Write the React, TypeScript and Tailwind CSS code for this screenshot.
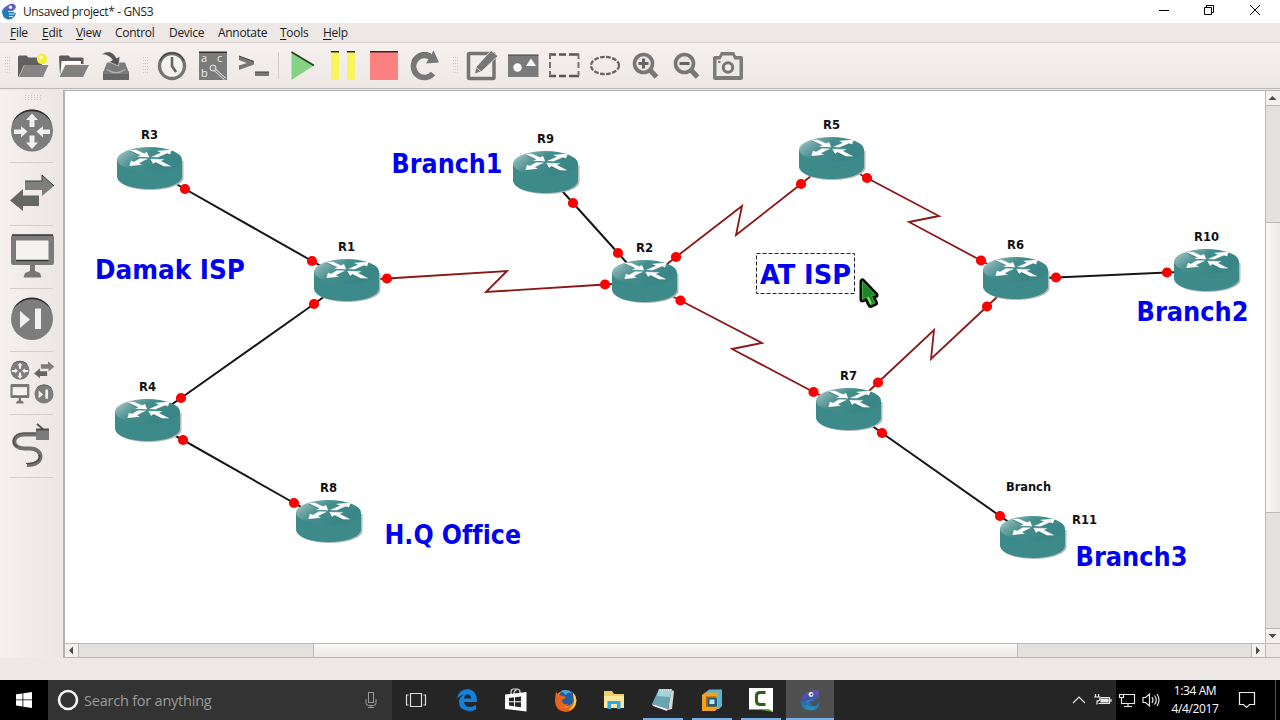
import type { ReactNode } from "react";

type Point = [number, number];

const menus = [
  { label: "File", key: true, width: "w-8" },
  { label: "Edit", key: true, width: "w-[34px]" },
  { label: "View", key: true, width: "w-[39px]" },
  { label: "Control", key: false, width: "w-[54px]" },
  { label: "Device", key: false, width: "w-[49px]" },
  { label: "Annotate", key: false, width: "w-[62px]" },
  { label: "Tools", key: true, width: "w-[43px]" },
  { label: "Help", key: true, width: "w-10" },
];

const routers = [
  { name: "R3", x: 117, y: 147, lx: 149, ly: 139 },
  { name: "R1", x: 314, y: 259, lx: 346, ly: 251 },
  { name: "R9", x: 513, y: 151, lx: 545, ly: 143 },
  { name: "R2", x: 612, y: 260, lx: 644, ly: 252 },
  { name: "R5", x: 799, y: 137, lx: 831, ly: 129 },
  { name: "R6", x: 983, y: 257, lx: 1015, ly: 249 },
  { name: "R10", x: 1174, y: 249, lx: 1206, ly: 241 },
  { name: "R7", x: 816, y: 388, lx: 848, ly: 380 },
  { name: "R4", x: 115, y: 399, lx: 147, ly: 391 },
  { name: "R8", x: 296, y: 500, lx: 328, ly: 492 },
  { name: "R11", x: 1000, y: 516, lx: 1084, ly: 524 },
];

const routerArrows = [
  "M12.500 3H19l8 3.500 3-1.200 2 4.900-11.500-.4 3-1.600z",
  "M34.500 10l9.500-4.300L40.500 4l14-1.300L53 7.200l-3-1-9.500 4.100z",
  "M23 11.500l7.500.3-8.800 4.500 2.800 1.400-12 1.300 1.500-4.900 3 .8z",
  "M33.500 12l13.500.4-3.300 1.600 10 5.200H47l-8.500-4.100-2.500 1.600z",
];

// first and last points sit under the routers, the second and second to last carry the status dots
const links: { serial?: boolean; points: Point[] }[] = [
  { points: [[150, 169], [185, 189], [312, 261], [346, 280]] },
  { points: [[346, 281], [314, 304], [181, 398], [148, 421]] },
  { points: [[148, 421], [183, 440], [294, 503], [328, 522]] },
  { points: [[545, 172], [573, 203], [618, 253], [644, 282]] },
  { points: [[1016, 279], [1056, 277.5], [1167, 272.5], [1206, 271]] },
  { points: [[849, 409], [882, 433], [1000, 516], [1032, 538]] },
  { serial: true, points: [[346, 281], [387, 278.5], [507, 271], [486, 292], [605, 284.5], [644, 282]] },
  { serial: true, points: [[644, 282], [676, 257], [742, 206], [736, 235], [801, 184], [832, 159]] },
  { serial: true, points: [[832, 159], [867, 178], [939, 216], [909, 222], [981, 260.5], [1016, 279]] },
  { serial: true, points: [[644, 282], [680.5, 300.5], [762, 343], [732, 349], [813.5, 392], [849, 410]] },
  { serial: true, points: [[849, 410], [878, 382.5], [934, 330], [931, 359], [987, 306.5], [1016, 279]] },
];

const notes = [
  { text: "Branch1", x: 391.5, y: 172.5, width: 111 },
  { text: "Damak ISP", x: 95, y: 278.5, width: 150 },
  { text: "AT ISP", x: 760, y: 283.5, width: 91 },
  { text: "Branch2", x: 1136.5, y: 320.5, width: 112 },
  { text: "H.Q Office", x: 384.5, y: 543.5, width: 136.5 },
  { text: "Branch3", x: 1075.5, y: 565.5, width: 112 },
];

function Grip() {
  return (
    <svg width="6" height="18" viewBox="0 0 6 18" fill="#cfcac7" className="shrink-0">
      {[0, 3, 6, 9, 12, 15].map((y) => (
        <g key={y}>
          <rect x="0" y={y} width="1" height="1" />
          <rect x="2" y={y} width="1" height="1" />
          <rect x="4" y={y} width="1" height="1" />
        </g>
      ))}
    </svg>
  );
}

function Tool({ x, children }: { x: number; children: ReactNode }) {
  return (
    <svg width="41" height="45" viewBox={`${x} 43 41 45`} className="shrink-0" fill="#7b7b7b">
      {children}
    </svg>
  );
}

function Toolbar() {
  return (
    <div className="flex h-[46px] shrink-0 items-center border-t border-[#d5d1ce] bg-linear-to-b from-[#f6f1ee] to-[#ece8e5] pl-[5px]">
      <Grip />
      <div className="ml-px flex">
        <Tool x={12}>
          <path d="M18 57q0-1.5 1.5-1.5h7l2 2H42V65H24l-5.500 12H18z" fill="#606060" />
          <circle cx="42" cy="59" r="5.200" fill="#f4ee3a" />
          <circle cx="41" cy="57.500" r="2" fill="#fffbb0" />
          <path d="M24.500 65H48.500L43 77H19z" fill="#858585" />
        </Tool>
        <Tool x={53}>
          <path d="M59 57q0-1.500 1.500-1.500h8l2 2H82q1.500 0 1.500 1.500v5H81v-3H62l-2 14z" fill="#5b5b5b" />
          <path d="M61.500 61H81v3H65l-4 9z" fill="#fff" />
          <path d="M65.500 65H89L83 77H59.500z" fill="#818181" />
        </Tool>
        <Tool x={94}>
          <path d="M107 62.500h18l3.500 9h.5v8h-26v-8h.5z" />
          <path d="M103 74h26v6h-26z" fill="#666" />
          <path d="M107 69.500q9 6.500 18 0" fill="none" stroke="#b5b5b5" strokeWidth="1.200" />
          <path
            d="M101 54.500q10-7 15.500 3.500l3.500-1.500-1.500 9.500-9.500-4 3.500-2q-4-6-11.500-5.500z"
            fill="#555"
            stroke="#eee"
            strokeWidth=".6"
          />
        </Tool>
      </div>
      <div className="ml-2 flex items-center">
        <Grip />
        <div className="ml-[3px] flex">
          <Tool x={152}>
            <circle cx="172" cy="66" r="12.500" fill="#f4f2f0" stroke="#757575" strokeWidth="3.400" />
            <path d="M160 61a13 13 0 0 1 24 0" fill="none" stroke="#4b4b4b" strokeWidth="1.500" />
            <path d="M172 57v9l4 6" fill="none" stroke="#666" strokeWidth="2.600" />
          </Tool>
          <Tool x={193}>
            <path d="M199 52h28v28h-28z" />
            <path d="M199 51.500h28v1.500h-28z" fill="#333" />
            <g fill="#eee" fontFamily="Open Sans" fontSize="11">
              <text x="201" y="62">a</text>
              <text x="217" y="62">c</text>
              <text x="201" y="77">b</text>
            </g>
            <path d="M214 69l11 10" stroke="#eee" strokeWidth="2.800" />
            <path d="M215 70l10 9" stroke="#777" strokeWidth="1.200" />
            <circle cx="213" cy="68" r="3" fill="#858585" stroke="#eee" />
          </Tool>
          <Tool x={234}>
            <path d="M239 56l15 5.500v3L239 70v-4.500l8-2.500-8-3zM255 72h14v4h-14z" fill="#777" />
            <path d="M239 56l15 5.500M255 72h14" stroke="#454545" />
          </Tool>
        </div>
        <div className="mr-[3px] ml-[3px] h-[27px] w-px bg-[#cfcbc8]" />
        <div className="flex">
          <Tool x={282}>
            <path d="M291.500 52L314 65.500 291.500 80z" fill="#84d284" />
            <path d="M291.500 52L314 65.500" stroke="#263d26" strokeWidth="1.500" />
          </Tool>
          <Tool x={323}>
            <path d="M331 52h8v28h-8zM347 52h8v28h-8z" fill="#faf45c" />
            <path d="M331 51h8v1.500h-8zM347 51h8v1.500h-8z" fill="#333018" />
          </Tool>
          <Tool x={364}>
            <path d="M370 52h28v28h-28z" fill="#ff8080" />
            <path d="M370 51h28v1.500h-28z" fill="#3c2020" />
          </Tool>
          <Tool x={405}>
            <path d="M433 73.500a11 11 0 1 1-1-15" fill="none" stroke="#777" strokeWidth="5.600" />
            <path d="M433.500 50.500L439 62.500 426 63.500z" fill="#777" />
            <path d="M412 61a13.500 13.500 0 0 1 19-7" fill="none" stroke="#555" strokeWidth="1" />
          </Tool>
        </div>
      </div>
      <div className="ml-[7px] flex items-center">
        <Grip />
        <div className="ml-0.5 flex">
          <Tool x={461}>
            <rect x="468.500" y="53.500" width="25.500" height="25" rx="1" fill="#f1eeec" stroke="#757575" strokeWidth="3.500" />
            <path d="M491 50.500l7 5.500-16.500 15.500-7 2.500 1.500-7z" fill="#777" stroke="#f1eeec" strokeWidth=".8" />
            <path d="M476 67.500l5 4" stroke="#eee" strokeWidth=".8" />
          </Tool>
          <Tool x={502}>
            <path d="M508 55h30.500v22H508z" />
            <path d="M508 54.500h30.500v1H508z" fill="#3e3e3e" />
            <circle cx="517.500" cy="67.500" r="4.200" fill="#fff" />
            <path d="M531 58.500l5 7.500h-10z" fill="#fff" />
          </Tool>
          <Tool x={543}>
            <path
              d="M549 54.500h7M559 54.500h7M569 54.500h10M549 76h7M559 76h7M569 76h10"
              stroke="#5a5350"
              strokeWidth="2.600"
            />
            <path d="M550 54v5M550 62v6M550 71v5M578.500 54v5M578.500 62v6M578.500 71v5" stroke="#7a7370" strokeWidth="2" />
          </Tool>
          <Tool x={584}>
            <ellipse cx="605" cy="65.500" rx="14" ry="8.600" fill="none" stroke="#665f5c" strokeWidth="2.200" strokeDasharray="4.500 1.600" />
          </Tool>
          <Tool x={625}>
            <path d="M649.500 69.500l7 7.500" stroke="#777" strokeWidth="5" />
            <circle cx="643.500" cy="63.500" r="9" fill="#e8e5e3" stroke="#777" strokeWidth="3.600" />
            <path d="M638.500 63.500h10M643.500 58.500v10" stroke="#646464" strokeWidth="3" />
          </Tool>
          <Tool x={666}>
            <path d="M690.500 69.500l7 7.500" stroke="#777" strokeWidth="5" />
            <circle cx="684.500" cy="63.500" r="9" fill="#e8e5e3" stroke="#777" strokeWidth="3.600" />
            <path d="M679.500 63.500h10" stroke="#646464" strokeWidth="3" />
          </Tool>
          <Tool x={707}>
            <path d="M721 52h13l2 4h5q2 0 2 2v20q0 2-2 2h-26q-2 0-2-2V58q0-2 2-2h4z" />
            <path d="M722.500 55.500h10l2 4h5v16.500h-23V59.500h4z" fill="#ece9e7" />
            <circle cx="728" cy="67.500" r="4.700" fill="#eee" stroke="#777" strokeWidth="3" />
            <path d="M718 61h2.500v2H718z" />
          </Tool>
        </div>
      </div>
    </div>
  );
}

function RouterDisc() {
  return (
    <>
      <circle cx="32" cy="130.500" r="21" fill="#7d7d7d" />
      <path d="M12 124a21 21 0 0 1 40 0 22 22 0 0 0-40 0z" fill="#2c2c2c" />
      <path
        d="M32 113.500l6 6.500h-3.500v7h-5v-7H26zM32 149l6-6.500h-3.500v-7h-5v7H26zM27.500 131.500L21 126v3.500h-7v4.500h7v3.500zM36.500 131.500L43 126v3.500h7v4.500h-7v3.500z"
        fill="#f2f0ee"
      />
    </>
  );
}

function SwitchArrows() {
  return (
    <>
      <path d="M25 181h17v-6l12 11-12 10v-6H25z" fill="#7f7f7f" />
      <path d="M39 195.500H23V189l-13 11.500L23 211v-5h16z" fill="#666" />
      <path d="M25 181h17v-6l12 11" fill="none" stroke="#3d3d3d" />
    </>
  );
}

function Monitor() {
  return (
    <>
      <path d="M11 237q0-2 2-2h39q2 0 2 2v25q0 3-2 3H13q-2 0-2-3z" fill="#7b7b7b" />
      <path d="M12 235h41" stroke="#333" strokeWidth="1.500" />
      <path d="M16 240.500h32.500V260H16z" fill="#f5f3f1" />
      <path d="M16 260.500h32.500" stroke="#333" strokeWidth="1.500" />
      <path d="M30 265h5v6l5 2 1.500 4.500h-18L25 273l5-2z" fill="#777" />
    </>
  );
}

function NextDisc() {
  return (
    <>
      <circle cx="32" cy="319" r="21" fill="#7d7d7d" />
      <path d="M12 312a21 21 0 0 1 40 0 22 22 0 0 0-40 0z" fill="#2c2c2c" />
      <path d="M20 311l10 8.500L20 328zM35 308.500h6V329h-6z" fill="#f2f0ee" />
    </>
  );
}

function Slot({ y, children }: { y: number; children: ReactNode }) {
  return (
    <div className="h-[63px] border-b border-[#d3cecb]">
      <svg width="44" height="62" viewBox={`10 ${y} 44 62`} className="overflow-visible">
        {children}
      </svg>
    </div>
  );
}

function DeviceBar() {
  return (
    <div className="w-[63px] shrink-0 bg-linear-to-r from-[#f6f1ee] to-[#ebe6e3] px-[10px] pt-[5px]">
      <svg width="44" height="5" viewBox="0 0 44 5" fill="#c8c3c0" className="block">
        {[15, 18, 21, 24, 27, 30].map((x) => (
          <g key={x}>
            <rect x={x} y="0" width="1" height="1" />
            <rect x={x} y="2" width="1" height="1" />
            <rect x={x} y="4" width="1" height="1" />
          </g>
        ))}
      </svg>
      <Slot y={100}><RouterDisc /></Slot>
      <Slot y={163}><SwitchArrows /></Slot>
      <Slot y={226}><Monitor /></Slot>
      <Slot y={289}><NextDisc /></Slot>
      <Slot y={352}>
        <g transform="translate(5.600 311.600) scale(.45)"><RouterDisc /></g>
        <g transform="translate(29.600 283.200) scale(.45)"><SwitchArrows /></g>
        <g transform="translate(5.600 281.300) scale(.44)"><Monitor /></g>
        <g transform="translate(29.600 250.600) scale(.45)"><NextDisc /></g>
      </Slot>
      <Slot y={415}>
        <path d="M37 434.500H24c-13 0-13 14 0 14h6c14 0 15 17-3 16.500" fill="none" stroke="#707070" strokeWidth="4" />
        <path d="M37 433H24c-11 0-14 10-6 14M26 463.500c12 0 15-5 13-9" fill="none" stroke="#484848" strokeWidth="1.200" />
        <path d="M36 429.500h13V440H36z" fill="#7b7b7b" />
        <path d="M36 429.500h13M37 424l7 6" stroke="#505050" strokeWidth="1.800" />
      </Slot>
    </div>
  );
}

function Router({ x, y }: { x: number; y: number }) {
  return (
    <g transform={`translate(${x} ${y})`}>
      <path d="M1.500 14v17c0 6.500 14 12 32 12s33-5.500 33-12V14z" fill="#b5b9b9" />
      <path d="M0 12.500v17C0 36.500 14 42 32.500 42S65 36.500 65 29.500v-17z" fill="#3d8a8a" />
      <ellipse cx="32.500" cy="12.500" rx="32.500" ry="12.500" fill="url(#lid)" />
      <path d={routerArrows.join("")} fill="#1f5b5b" transform="translate(-.5 .8)" opacity=".55" />
      <path d={routerArrows.join("")} fill="#fff" stroke="#fff" strokeWidth=".3" />
    </g>
  );
}

function Topology() {
  return (
    <svg width="1200" height="552" viewBox="65 91 1200 552" className="block shrink-0 bg-white">
      <defs>
        <linearGradient id="lid" x1="0" y1="0.2" x2="0.8" y2="0.6">
          <stop offset="0" stopColor="#a9cccc" />
          <stop offset="0.2" stopColor="#79abab" />
          <stop offset="0.5" stopColor="#438d8d" />
          <stop offset="1" stopColor="#3a8686" />
        </linearGradient>
      </defs>
      {links.map(({ serial, points }, i) => (
        <polyline
          key={i}
          points={points.join(" ")}
          fill="none"
          stroke={serial ? "#8b1717" : "#161616"}
          strokeWidth={serial ? 1.8 : 2}
        />
      ))}
      {routers.map((r) => (
        <Router key={r.name} x={r.x} y={r.y} />
      ))}
      {links.map(({ points }) =>
        [points[1], points[points.length - 2]].map(([x, y]) => (
          <circle key={`${x}-${y}`} cx={x} cy={y} r="5.100" fill="#fd0000" />
        ))
      )}
      <g
        fontFamily="DejaVu Sans Condensed, DejaVu Sans, sans-serif"
        fontWeight="bold"
        className="[font-variant-ligatures:none]"
      >
        <g fontSize="12.500" textAnchor="middle" fill="#111">
          {routers.map((r) => (
            <text key={r.name} x={r.lx + 0.5} y={r.ly} textLength={r.name.length === 3 ? 25 : 17} lengthAdjust="spacingAndGlyphs">
              {r.name}
            </text>
          ))}
          <text x="1028.500" y="491" textLength="45" lengthAdjust="spacingAndGlyphs">Branch</text>
        </g>
        <g fontSize="27" fill="#0000f0">
          {notes.map((n) => (
            <text key={n.text} x={n.x} y={n.y} textLength={n.width} lengthAdjust="spacingAndGlyphs">
              {n.text}
            </text>
          ))}
        </g>
      </g>
      <rect x="756.500" y="253.500" width="98" height="40" fill="none" stroke="#222" strokeDasharray="4 2" />
      <path
        d="M862.500 281.500v18l4-2.500 4 8 4.500-2-3.500-7.500 4-.5z"
        fill="#020a02"
        stroke="#020a02"
        strokeWidth="6"
        strokeLinejoin="round"
      />
      <path d="M862.500 281.500v18l4-2.500 4 8 4.500-2-3.500-7.500 4-.5z" fill="#1d8428" stroke="#4fc94a" strokeWidth=".8" />
      <path d="M868 297l3 6.500" stroke="#7be86a" strokeWidth="1.800" />
    </svg>
  );
}

function Arrow({ d }: { d: string }) {
  return (
    <svg width="14" height="14" viewBox="0 0 14 14" className="shrink-0 bg-[#f4f1ef]">
      <path d={d} fill="#4c4c4c" />
    </svg>
  );
}

function Workspace() {
  return (
    <div className="flex-1 border-t border-b border-l-2 border-t-[#b5b2af] border-b-[#b9b5b2] border-l-[#b5b1ae]">
      <div className="flex h-[552px]">
        <Topology />
        <div className="flex w-[15px] flex-col border-l border-[#bbb8b5]">
          <Arrow d="M2.500 9L6.500 5l4 4z" />
          <div className="h-[117px] border-t border-[#bbb8b5] bg-[#e2e1de]" />
          <div className="h-[291px] border-y border-[#bbb8b5] bg-linear-to-r from-[#faf8f7] to-[#ece9e7]" />
          <div className="flex-1 border-b border-[#bbb8b5] bg-[#e2e1de]" />
          <Arrow d="M2.500 5l4 4 4-4z" />
        </div>
      </div>
      <div className="flex h-[14px] border-t border-[#bbb8b5]">
        <div className="flex w-[13px] overflow-hidden">
          <Arrow d="M8 2.500l-4 4 4 4z" />
        </div>
        <div className="w-[235px] border-l border-[#bbb8b5] bg-[#e2e1de]" />
        <div className="w-[705px] border-x border-[#bbb8b5] bg-linear-to-b from-[#faf8f7] to-[#ece9e7]" />
        <div className="w-[234px] border-r border-[#bbb8b5] bg-[#e2e1de]" />
        <div className="flex w-[13px] overflow-hidden">
          <Arrow d="M4 2.500l4 4-4 4z" />
        </div>
        <div className="flex-1 border-l border-[#bbb8b5] bg-[#ede8e5]" />
      </div>
    </div>
  );
}

function Chameleon() {
  return (
    <svg width="22" height="22" viewBox="0 0 22 22">
      <defs>
        <linearGradient id="skin" x1="0" y1="0" x2="0" y2="1">
          <stop offset="0" stopColor="#6a4fb8" />
          <stop offset=".45" stopColor="#3a56a3" />
          <stop offset="1" stopColor="#1a93c0" />
        </linearGradient>
      </defs>
      <path
        d="M10 3q5-3 9-1.500 2 1.500.5 4.500.5 4-3.500 5.500-5 .5-5 3 .5 3 4 2.500 4-.5 3.500-4 3 0 1.500 4-2.500 4.500-8.500 4.500Q2 21 1.500 12.500 2 5 10 3z"
        fill="url(#skin)"
      />
      <path d="M8 13q3-3 6-1.500M8 17q4 3.500 7 1" fill="none" stroke="#3590c4" strokeWidth="1.200" />
      <circle cx="12" cy="5.500" r="2.400" fill="#f2f4fb" />
      <circle cx="12.500" cy="5.500" r=".9" fill="#32346a" />
    </svg>
  );
}

function TitleLogo() {
  return (
    <svg width="17" height="17" viewBox="0 0 17 17">
      <path d="M7 2q5-3 7 0 2 2-.5 4.500Q11 9 8 8.500T1 8q2-4 6-6z" fill="#5d5fc0" />
      <path d="M1 7.500q4-2 8 1 4 0 6 2-2 6-8 6-6-1-6-9z" fill="#1c7fb8" />
      <path d="M7 8.500h6M8 11h5.500M8 13.500h4" stroke="#d9edf8" strokeWidth="1.100" />
      <circle cx="9.500" cy="4.200" r="1.700" fill="#eef2ff" />
    </svg>
  );
}

function TaskButton({ open, active, children }: { open?: boolean; active?: boolean; children: ReactNode }) {
  return (
    <div className={`relative flex h-10 w-12 shrink-0 items-center justify-center ${active ? "bg-[#505050]" : ""}`}>
      {children}
      {open && <div className={`absolute bottom-0 h-0.5 bg-[#76b0e4] ${active ? "inset-x-0" : "inset-x-1"}`} />}
    </div>
  );
}

function Taskbar() {
  return (
    <div className="flex h-10 shrink-0 bg-[#252525] text-white">
      <div className="flex w-12 items-center justify-center bg-black">
        <svg width="16" height="16" viewBox="0 0 16 16" fill="#fff">
          <path d="M0 2.300l6.500-.9v6.100H0zM7.300 1.300L16 0v7.500H7.300zM0 8.300h6.500v6.200L0 13.600zM7.300 8.300H16V16l-8.700-1.300z" />
        </svg>
      </div>
      <div className="flex w-[344px] items-center bg-[#333] pl-2">
        <svg width="24" height="24" viewBox="0 0 24 24">
          <circle cx="12" cy="12" r="9" fill="none" stroke="#f5f5f5" strokeWidth="2.600" />
        </svg>
        <span className="ml-1 pt-px font-['Open_Sans',sans-serif] text-[14.5px] tracking-[-0.22px] text-[#9a9a9a]">
          Search for anything
        </span>
        <svg width="14" height="18" viewBox="0 0 14 18" fill="none" stroke="#9a9a9a" className="mr-3.5 ml-auto">
          <rect x="4.500" y="1.500" width="5" height="10" />
          <path d="M2 8v4q0 2.500 2.500 2.500h5q2.500 0 2.500-2.500V8M7 14.500V17M4 16.500h6" />
        </svg>
      </div>
      <TaskButton>
        <svg width="22" height="16" viewBox="0 0 22 16" fill="none" stroke="#ddd" strokeWidth="1.200">
          <path d="M5.500 1.500h11v13h-11zM3.500 3H1.500v10h2M18.500 3h2v10h-2" />
        </svg>
      </TaskButton>
      <div className="ml-[3px] flex gap-px">
        <TaskButton>
          <svg width="22" height="22" viewBox="0 0 22 22">
            <path d="M1 10Q2.500 0 12 0q9 1 9 13H8q.5 5 6 5 3 0 6-2v4.500Q17 22 13 22 3 21 3 13q0-5 5-7-4 0-7 4zM8 9.500h7Q15 5.500 11.500 5.500 8.500 5.500 8 9.500z" fill="#1380dc" />
          </svg>
        </TaskButton>
        <TaskButton>
          <svg width="22" height="24" viewBox="0 0 22 24">
            <path d="M6 7V4q0-3 3-3h3q3 0 3 3v2M9 6q0-4 3-4" fill="none" stroke="#ddd" strokeWidth="1.200" />
            <path d="M0 6.500L21.500 4v19.500L0 21z" fill="#fff" />
            <path d="M4 10l5-.7v4H4zM10 9.200l6-.8v4.900h-6zM4 14.200h5v4l-5-.6zM10 14.200h6v5l-6-.8z" fill="#272727" />
          </svg>
        </TaskButton>
        <TaskButton>
          <svg width="23" height="23" viewBox="0 0 23 23">
            <circle cx="12" cy="11.500" r="10.500" fill="#f39322" />
            <circle cx="12.500" cy="9" r="8" fill="#245c9e" />
            <path d="M7 2q6-3 11 2-5-1-6 2z" fill="#43a7db" />
            <path d="M2 3q3 4 8 4l2 2-4 2q0 5 6 4-3 5-8 2 3 3 8 1 5-2 6-7l-1-7q4 4 3 9-1 9-10 10Q1 22 1 12q0-5 1-9z" fill="#e76320" />
            <path d="M19 4q4 4 3 9-1 7-8 9 6-5 6-10z" fill="#ffd23d" />
          </svg>
        </TaskButton>
        <TaskButton>
          <svg width="22" height="20" viewBox="0 0 22 20">
            <path d="M1 1h8l2 3h10v14H1z" fill="#f1cd63" />
            <path d="M1 6h20v12H1z" fill="#fbe6a0" />
            <path d="M4.500 19V11h13v8h-3.500v-5H8v5z" fill="#35a7e0" />
          </svg>
        </TaskButton>
        <TaskButton open>
          <svg width="22" height="22" viewBox="0 0 22 22">
            <path d="M19 1l3 1-2 18-4 1z" fill="#d5d8d8" />
            <path d="M7 0h13l-4 20L0 15z" fill="#69a5b3" />
            <path d="M7 0h13l-2 8L5 7z" fill="#a5d2da" />
            <path d="M0 15l16 5-1 2L1 17z" fill="#eee" />
            <path d="M8 1h11" stroke="#eee" strokeDasharray="1 1" />
          </svg>
        </TaskButton>
        <TaskButton open>
          <svg width="22" height="23" viewBox="0 0 22 23">
            <path d="M5 3l3-2.500h13V17l-3 3H5z" fill="#59b6cf" />
            <path d="M1 6l3-2.500h13V19l-3 3H1z" fill="#f2a121" />
            <path d="M5 7.500h10.500V18H5z" fill="#a95f10" />
            <path d="M7 9h9v8.500H7z" fill="#205d76" />
            <path d="M8.500 10.500h5V15h-5z" fill="#c3e4ea" />
          </svg>
        </TaskButton>
        <TaskButton open>
          <svg width="24" height="24" viewBox="0 0 24 24">
            <path d="M0 0h24v24l-4-2.500H0z" fill="#fff" />
            <path d="M16.500 4.500H11Q7.500 4.500 7.500 8v5q0 3.500 3.500 3.500h5.500" fill="none" stroke="#315f18" strokeWidth="3" />
            <path d="M10 21.500h10l4 2.500z" fill="#5aad1e" />
          </svg>
        </TaskButton>
        <TaskButton open active><Chameleon /></TaskButton>
      </div>
      <div className="ml-auto flex bg-black">
        <div className="flex w-[49px] items-center bg-[#252525]">
          <svg width="49" height="20" viewBox="0 0 49 20" fill="none" stroke="#e6e6e6" strokeWidth="1.200">
            <path d="M6 13l6-6 6 6" />
            <path d="M28.500 4v3M31.500 4v3M27 7h6v1.500q0 2.500-3 2.500v3.500M34 7.500h8.500v6H31.500M44 9v3" />
            <path d="M34 9h7v3h-7z" fill="#e6e6e6" />
          </svg>
        </div>
        <svg width="48" height="40" viewBox="1116 680 48 40" fill="none" stroke="#e6e6e6" strokeWidth="1.200">
          <path d="M1124 694.500h10.500v9h-13v-5M1119.500 694.500h4v3h-4zM1121.500 698v5M1128 704v3M1124 706.500h8" />
          <path d="M1143 697.500h2.500l4-3.500v12l-4-3.500h-2.500zM1152 697q2 3 0 6M1154.500 695.500q3.500 4.500 0 9M1157 694q4 6 0 12" />
        </svg>
        <div className="flex w-[62px] flex-col items-center pt-0.5 font-['Open_Sans',sans-serif] text-[12px] leading-[18px] tracking-[-0.4px]">
          <span>1:34 AM</span>
          <span>4/4/2017</span>
        </div>
        <svg width="49" height="40" viewBox="1226 680 49 40" fill="none" stroke="#eee" strokeWidth="1.200">
          <path d="M1239.500 692.500h15v12h-5l-3 3-3-3h-4z" />
        </svg>
        <div className="w-[5px] border-l border-[#555]" />
      </div>
    </div>
  );
}

export default function App() {
  return (
    <div className="flex h-[720px] w-[1280px] flex-col overflow-hidden bg-[#ede8e5] font-['Open_Sans',sans-serif] text-[12px] text-[#1c1c1c]">
      <div className="flex h-[23px] shrink-0 items-center bg-white pl-px">
        <TitleLogo />
        <span className="ml-[5px] tracking-[-0.38px]">Unsaved project* - GNS3</span>
        <svg width="122" height="23" viewBox="1158 0 122 23" fill="none" stroke="#000" className="ml-auto">
          <path d="M1159 10.500h10M1204.500 7.500h7v7h-7zM1206.500 7.500v-2h7v7h-2M1250 5l10 10M1260 5l-10 10" />
        </svg>
      </div>
      <div className="flex h-[19px] shrink-0 items-center pl-2.5 tracking-[-0.3px] whitespace-nowrap">
        {menus.map((m) => (
          <span key={m.label} className={m.width}>
            {m.key ? <span className="underline underline-offset-2">{m.label[0]}</span> : m.label[0]}
            {m.label.slice(1)}
          </span>
        ))}
      </div>
      <Toolbar />
      <div className="flex h-[570px] shrink-0 border-t border-[#bcb8b5] pt-px">
        <DeviceBar />
        <Workspace />
      </div>
      <div className="h-[22px] shrink-0" />
      <Taskbar />
    </div>
  );
}
